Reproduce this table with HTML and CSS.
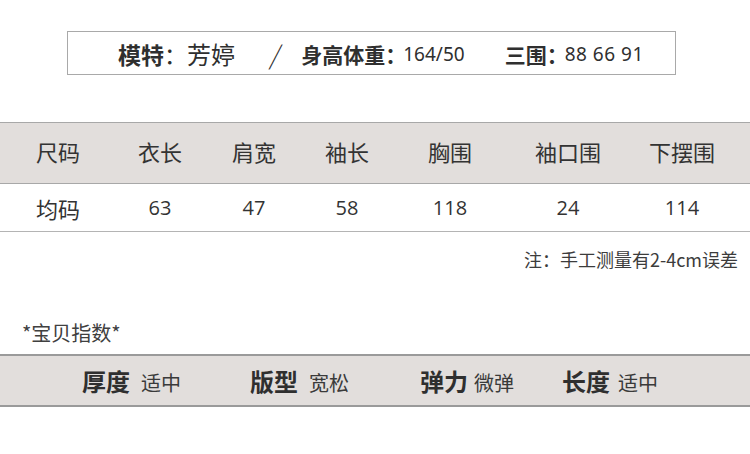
FILE: index.html
```html
<!DOCTYPE html>
<html lang="zh-CN">
<head>
<meta charset="utf-8">
<title>尺码信息</title>
<link rel="stylesheet" href="styles.css">
</head>
<body>
<div class="page">
  <div class="model-box">
    <span class="m-label">模特</span><span class="m-colon">：</span><span class="m-name">芳婷</span>
    <span class="m-slash">/</span>
    <span class="m-label2">身高体重：</span><span class="m-num">164/50</span>
    <span class="m-label2 m-gap">三围：</span><span class="m-num m-spaced">88 66 91</span>
  </div>

  <div class="size-table">
    <div class="row head">
      <div class="cell">尺码</div>
      <div class="cell">衣长</div>
      <div class="cell">肩宽</div>
      <div class="cell">袖长</div>
      <div class="cell">胸围</div>
      <div class="cell">袖口围</div>
      <div class="cell">下摆围</div>
    </div>
    <div class="row body">
      <div class="cell">均码</div>
      <div class="cell num">63</div>
      <div class="cell num">47</div>
      <div class="cell num">58</div>
      <div class="cell num">118</div>
      <div class="cell num">24</div>
      <div class="cell num">114</div>
    </div>
  </div>

  <div class="note">注：手工测量有2-4cm误差</div>

  <div class="index-title">*宝贝指数*</div>

  <div class="index-band">
    <div class="idx idx1"><span class="idx-k">厚度</span><span class="idx-v">适中</span></div>
    <div class="idx idx2"><span class="idx-k">版型</span><span class="idx-v">宽松</span></div>
    <div class="idx idx3"><span class="idx-k">弹力</span><span class="idx-v">微弹</span></div>
    <div class="idx idx4"><span class="idx-k">长度</span><span class="idx-v">适中</span></div>
  </div>
</div>
</body>
</html>
```

FILE: styles.css
```css
html, body {
  margin: 0;
  padding: 0;
  background: #ffffff;
}
body {
  font-family: "Noto Sans CJK SC", "Noto Sans", sans-serif;
  color: #333333;
}
.page {
  width: 750px;
  height: 454px;
  overflow: hidden;
  padding-top: 31px;
  box-sizing: border-box;
}
.model-box {
  margin-left: 67px;
  width: 609px;
  height: 44px;
  box-sizing: border-box;
  border: 1px solid #a9a9a9;
  display: flex;
  align-items: center;
  padding-left: 50px;
  padding-top: 2px;
  color: #2f2f2f;
  line-height: 1;
}
.m-label {
  font-size: 23px;
  font-weight: 700;
}
.m-colon {
  font-size: 23px;
}
.m-name {
  font-size: 24px;
}
.m-slash {
  font-size: 26px;
  margin-left: 36px;
  margin-right: 20px;
  font-weight: 300;
  transform: skewX(-10deg);
}
.m-label2 {
  font-size: 21px;
  font-weight: 700;
}
.m-gap {
  margin-left: 40px;
}
.m-num {
  font-family: "Noto Sans", sans-serif;
  font-size: 19px;
  font-weight: 400;
  margin-left: -3px;
}
.m-spaced {
  letter-spacing: 0.5px;
}

.size-table {
  margin-top: 47px;
}
.row {
  display: grid;
  grid-template-columns: 116px 88px 100px 86px 120px 116px 112px;
  align-items: center;
}
.row.head {
  height: 62px;
  background: #e2dedc;
  border-top: 1px solid #a8a8a8;
  border-bottom: 1px solid #a8a8a8;
  box-sizing: border-box;
}
.row.head .cell {
  padding-bottom: 5px;
}
.row.body {
  height: 48px;
  border-bottom: 1px solid #b4b4b4;
  box-sizing: border-box;
}
.cell {
  text-align: center;
  font-size: 22px;
  color: #333333;
  line-height: 1;
}
.cell.num {
  font-family: "Open Sans", "Noto Sans", sans-serif;
  font-size: 20px;
}

.note {
  text-align: right;
  padding-right: 12px;
  margin-top: 15px;
  font-size: 18px;
  color: #3c3c3c;
  line-height: 24px;
}

.index-title {
  margin-top: 49px;
  margin-left: 22px;
  font-size: 20px;
  color: #404040;
  line-height: 26px;
}

.index-band {
  margin-top: 8px;
  height: 53px;
  box-sizing: border-box;
  background: #e2dedc;
  border-top: 2px solid #9a9a9a;
  border-bottom: 2px solid #9a9a9a;
  display: flex;
  align-items: center;
  padding-left: 82px;
  color: #2f2f2f;
}
.idx {
  display: flex;
  align-items: baseline;
}
.idx-k {
  font-size: 24px;
  font-weight: 700;
}
.idx-v {
  font-size: 20px;
  margin-left: 11px;
  color: #3a3a3a;
}
.idx2 { margin-left: 69px; }
.idx3 { margin-left: 71px; }
.idx3 .idx-v { margin-left: 6px; }
.idx4 { margin-left: 48px; }
.idx4 .idx-v { margin-left: 8px; }
```
